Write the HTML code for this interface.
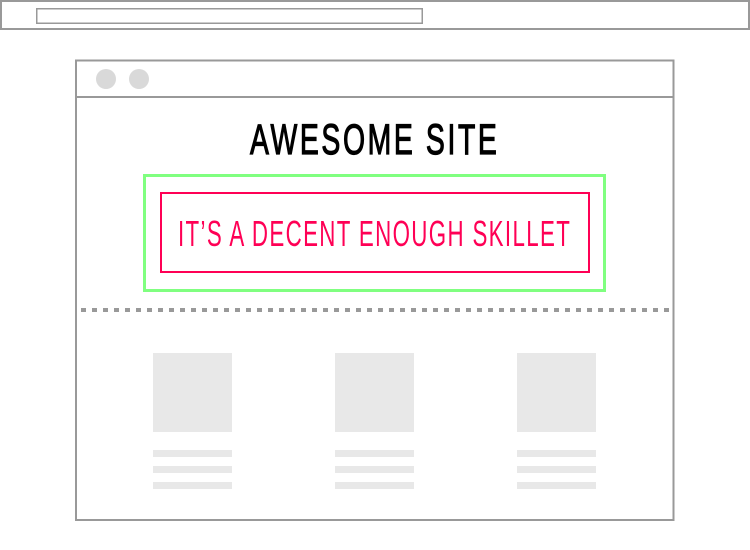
<!DOCTYPE html>
<html><head><meta charset="utf-8"><style>
html,body{margin:0;padding:0;background:#fff;}
svg{display:block;}
</style></head><body>
<svg width="750" height="550" viewBox="0 0 750 550" xmlns="http://www.w3.org/2000/svg">
<rect x="1" y="1" width="748" height="28" fill="#fff" stroke="#999" stroke-width="2"/>
<rect x="36.75" y="8.75" width="385.5" height="14.5" fill="#fff" stroke="#999" stroke-width="1.5"/>
<rect x="76" y="60.5" width="597.5" height="459.5" fill="#fff" stroke="#999" stroke-width="2"/>
<line x1="76" y1="97" x2="674" y2="97" stroke="#999" stroke-width="2"/>
<circle cx="106" cy="79" r="10" fill="#d9d9d9"/>
<circle cx="139" cy="79" r="10" fill="#d9d9d9"/>
<g transform="translate(250,154) scale(0.66,1)">
<text x="0" y="0" font-family="Liberation Sans, sans-serif" font-size="43" fill="#000" stroke="#000" stroke-width="1.2" textLength="374" lengthAdjust="spacing">AWESOME SITE</text>
</g>
<rect x="144.5" y="175.5" width="460" height="115" fill="none" stroke="#80ff80" stroke-width="3"/>
<rect x="161" y="193" width="428" height="79" fill="none" stroke="#f05" stroke-width="2"/>
<g transform="translate(178,246) scale(0.62,1)">
<text x="0" y="0" font-family="Liberation Sans, sans-serif" font-size="36" fill="#f05" textLength="632" lengthAdjust="spacing">IT’S A DECENT ENOUGH SKILLET</text>
</g>
<line x1="81" y1="310" x2="672" y2="310" stroke="#999" stroke-width="4" stroke-dasharray="5 6"/>
<g fill="#e8e8e8">
<rect x="153" y="353" width="79" height="79"/>
<rect x="153" y="450" width="79" height="7"/><rect x="153" y="466" width="79" height="7"/><rect x="153" y="482" width="79" height="7"/>
<rect x="335" y="353" width="79" height="79"/>
<rect x="335" y="450" width="79" height="7"/><rect x="335" y="466" width="79" height="7"/><rect x="335" y="482" width="79" height="7"/>
<rect x="517" y="353" width="79" height="79"/>
<rect x="517" y="450" width="79" height="7"/><rect x="517" y="466" width="79" height="7"/><rect x="517" y="482" width="79" height="7"/>
</g>
</svg>
</body></html>
